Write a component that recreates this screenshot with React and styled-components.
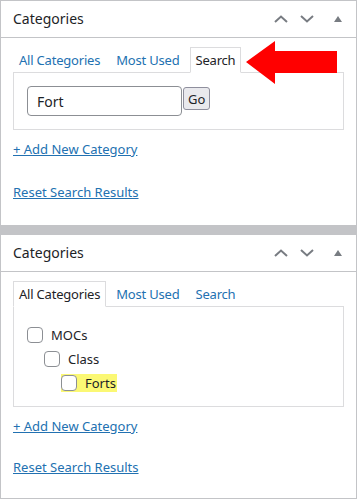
import React from "react";
import styled, { createGlobalStyle } from "styled-components";

const GlobalStyle = createGlobalStyle`
  body {
    margin: 0;
    background: #ffffff;
    font-family: "Noto Sans", "Open Sans", sans-serif;
    color: #1d2327;
  }
`;

const Page = styled.div`
  position: relative;
  width: 357px;
  display: flex;
  flex-direction: column;
  gap: 8px;
  background: #c3c4c7;
`;

const Panel = styled.div`
  background: #fff;
  border: 1px solid #c3c4c7;
  padding-bottom: ${(p) => p.$bottom}px;
`;

const Header = styled.div`
  height: 36px;
  border-bottom: 1px solid #c3c4c7;
  display: flex;
  align-items: center;
  padding: 0 0 0 12px;
`;

const Title = styled.h2`
  flex: 1;
  margin: 0;
  font-size: 14px;
  font-weight: 400;
  line-height: 1.4;
`;

const Handles = styled.div`
  display: flex;
  align-items: center;
  color: #787c82;
`;

const HandleButton = styled.span`
  width: ${(p) => p.$w}px;
  height: 36px;
  display: flex;
  align-items: center;
  justify-content: center;
`;

const Body = styled.div`
  padding: 0 12px;
`;

const Tabs = styled.ul`
  display: flex;
  gap: 4px;
  margin: 9px 0 0;
  padding: 0;
  list-style: none;
`;

const Tab = styled.li`
  padding: 3px 5px;
  line-height: 18px;
  font-size: 13px;
  letter-spacing: -0.2px;
  border: 1px solid ${(p) => (p.$active ? "#dcdcde" : "transparent")};
  border-bottom: 1px solid ${(p) => (p.$active ? "#fff" : "transparent")};
  background: ${(p) => (p.$active ? "#fff" : "transparent")};
  color: ${(p) => (p.$active ? "#1d2327" : "#2271b1")};
  margin-bottom: -1px;
  position: relative;
`;

const TabPanel = styled.div`
  border: 1px solid #dcdcde;
  padding: ${(p) => p.$pad};
`;

const SearchRow = styled.div`
  display: flex;
  align-items: flex-start;
  gap: 1px;
`;

const SearchInput = styled.div`
  width: 155px;
  height: 30px;
  box-sizing: border-box;
  border: 1px solid #8c8f94;
  border-radius: 4px;
  padding: 0 9px;
  display: flex;
  align-items: center;
  font-size: 14px;
`;

const GoButton = styled.span`
  margin-top: 1px;
  height: 23px;
  box-sizing: border-box;
  padding: 0 4px;
  border: 1px solid #8f8f9d;
  border-radius: 3px;
  background: #e9e9ed;
  font-size: 13px;
  display: flex;
  align-items: center;
`;

const Checklist = styled.ul`
  list-style: none;
  margin: 0;
  padding: 0 0 0 ${(p) => (p.$nested ? 17 : 0)}px;
`;

const Item = styled.li`
  height: 24px;
  display: flex;
  align-items: center;
`;

const Label = styled.label`
  display: flex;
  align-items: center;
  gap: 8px;
  font-size: 13px;
  line-height: 18px;
  padding-right: 1px;
  background: ${(p) => (p.$highlight ? "#fbf874" : "transparent")};
`;

const Box = styled.span`
  width: 16px;
  height: 16px;
  box-sizing: border-box;
  border: 1px solid #8c8f94;
  border-radius: 4px;
  background: #fff;
`;

const LinkLine = styled.p`
  margin: ${(p) => p.$top}px 0 0;
  font-size: 13px;
  line-height: 18px;
`;

const Link = styled.a`
  color: #2271b1;
  text-decoration: underline;
`;

const Arrow = styled.svg`
  position: absolute;
  left: 246px;
  top: 41px;
`;

function ChevronUp() {
  return (
    <svg width="14" height="8" viewBox="0 0 14 8">
      <path d="M1 7 L7 1.5 L13 7" fill="none" stroke="currentColor" strokeWidth="2" />
    </svg>
  );
}

function ChevronDown() {
  return (
    <svg width="14" height="8" viewBox="0 0 14 8">
      <path d="M1 1 L7 6.5 L13 1" fill="none" stroke="currentColor" strokeWidth="2" />
    </svg>
  );
}

function Triangle() {
  return (
    <svg width="8" height="6" viewBox="0 0 8 6">
      <path d="M0 6 L4 0 L8 6 Z" fill="currentColor" />
    </svg>
  );
}

function PanelHeader() {
  return (
    <Header>
      <Title>Categories</Title>
      <Handles>
        <HandleButton $w={26}>
          <ChevronUp />
        </HandleButton>
        <HandleButton $w={26}>
          <ChevronDown />
        </HandleButton>
        <HandleButton $w={36}>
          <Triangle />
        </HandleButton>
      </Handles>
    </Header>
  );
}

function TabBar({ active }) {
  return (
    <Tabs>
      {["All Categories", "Most Used", "Search"].map((t) => (
        <Tab key={t} $active={t === active}>
          {t}
        </Tab>
      ))}
    </Tabs>
  );
}

function Check({ label, highlight }) {
  return (
    <Label $highlight={highlight}>
      <Box />
      {label}
    </Label>
  );
}

export default function App() {
  return (
    <>
      <GlobalStyle />
      <Page>
        <Panel $bottom={24}>
          <PanelHeader />
          <Body>
            <TabBar active="Search" />
            <TabPanel $pad="13px 13px">
              <SearchRow>
                <SearchInput>Fort</SearchInput>
                <GoButton>Go</GoButton>
              </SearchRow>
            </TabPanel>
            <LinkLine $top={10}>
              <Link>+ Add New Category</Link>
            </LinkLine>
            <LinkLine $top={25}>
              <Link>Reset Search Results</Link>
            </LinkLine>
          </Body>
        </Panel>
        <Panel $bottom={22}>
          <PanelHeader />
          <Body>
            <TabBar active="All Categories" />
            <TabPanel $pad="16px 13px 11px">
              <Checklist>
                <Item>
                  <Check label="MOCs" />
                </Item>
                <Checklist $nested>
                  <Item>
                    <Check label="Class" />
                  </Item>
                  <Checklist $nested>
                    <Item>
                      <Check label="Forts" highlight />
                    </Item>
                  </Checklist>
                </Checklist>
              </Checklist>
            </TabPanel>
            <LinkLine $top={10}>
              <Link>+ Add New Category</Link>
            </LinkLine>
            <LinkLine $top={23}>
              <Link>Reset Search Results</Link>
            </LinkLine>
          </Body>
        </Panel>
        <Arrow width="92" height="44" viewBox="0 0 92 44">
          <path d="M0 21 L29 0 L29 10 L91 10 L91 32 L29 32 L29 43 Z" fill="#ff0000" />
        </Arrow>
      </Page>
    </>
  );
}
